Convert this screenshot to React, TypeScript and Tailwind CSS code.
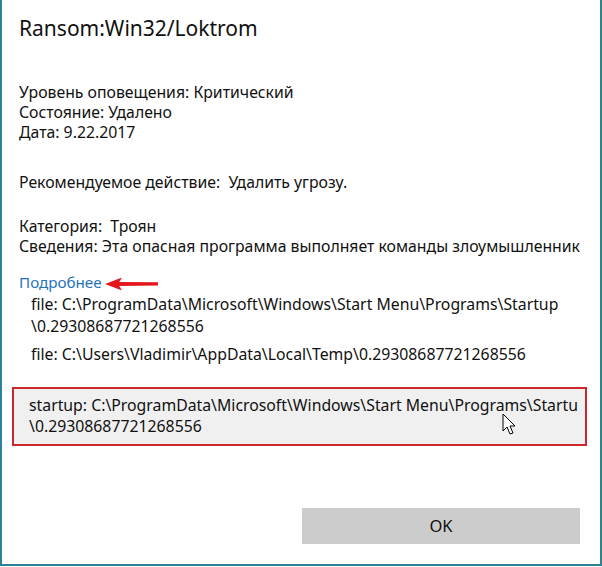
import React from "react";

const font = { fontFamily: '"Noto Sans", "Open Sans", sans-serif' };

export default function App() {
  return (
    <div
      className="relative w-[602px] h-[566px] bg-white border-l-2 border-r-2 border-b-2 border-[#2f8196] text-[#111] overflow-hidden"
      style={font}
    >
      <div className="pl-[17px] pt-[14px]">
        <h1 className="text-[21px] leading-[28px] font-normal">Ransom:Win32/Loktrom</h1>

        <div className="mt-[40px] text-[15.8px] leading-[20px]">
          <p>Уровень оповещения: Критический</p>
          <p>Состояние: Удалено</p>
          <p>Дата: 9.22.2017</p>
        </div>

        <p className="mt-[30px] text-[15.8px] leading-[20px]">Рекомендуемое действие:&nbsp; Удалить угрозу.</p>

        <div className="mt-[24px] text-[15.8px] leading-[20px] whitespace-nowrap">
          <p>Категория:&nbsp; Троян</p>
          <p>Сведения: Эта опасная программа выполняет команды злоумышленник</p>
        </div>

        <div className="mt-[16px] flex items-center gap-[3px] text-[15.2px] leading-[20px]">
          <span className="text-[#1f74bd]">Подробнее</span>
          <RedArrow />
        </div>

        <div className="mt-[1px] pl-[12px] text-[15.8px] leading-[22px] whitespace-nowrap">
          <p>file: C:\ProgramData\Microsoft\Windows\Start Menu\Programs\Startup</p>
          <p>\0.29308687721268556</p>
          <p className="mt-[7px] leading-[20px]">file: C:\Users\Vladimir\AppData\Local\Temp\0.29308687721268556</p>
        </div>
      </div>

      <div className="relative mt-[23px] ml-[10px] mr-[13px] h-[59px] border-2 border-[#c9282d] bg-[#f0f0f0] px-[15px] py-[6px] text-[15.8px] leading-[21px] whitespace-nowrap overflow-hidden">
        <p>startup: C:\ProgramData\Microsoft\Windows\Start Menu\Programs\Startu</p>
        <p>\0.29308687721268556</p>
        <Cursor />
      </div>

      <div className="mt-[62px] flex justify-end pr-[20px]">
        <button className="w-[278px] h-[36px] bg-[#cccccc] text-[16.5px] text-[#111]">OK</button>
      </div>
    </div>
  );
}

function RedArrow() {
  return (
    <svg width="54" height="14" viewBox="0 0 54 14" className="mt-[3px]">
      <path d="M12 5 L53 5.2 L53 8.6 L12 9 Z" fill="#e2161b" />
      <path d="M0 7 L17 0.5 L13 7 L17 13.5 Z" fill="#e2161b" />
    </svg>
  );
}

function Cursor() {
  return (
    <svg
      width="16"
      height="24"
      viewBox="0 0 16 24"
      className="absolute left-[488px] top-[24px]"
    >
      <path
        d="M1 1 L1 18 L5 14 L8 21 L11 20 L8 13 L13 13 Z"
        fill="#fff"
        stroke="#000"
        strokeWidth="1"
        strokeLinejoin="round"
      />
    </svg>
  );
}
